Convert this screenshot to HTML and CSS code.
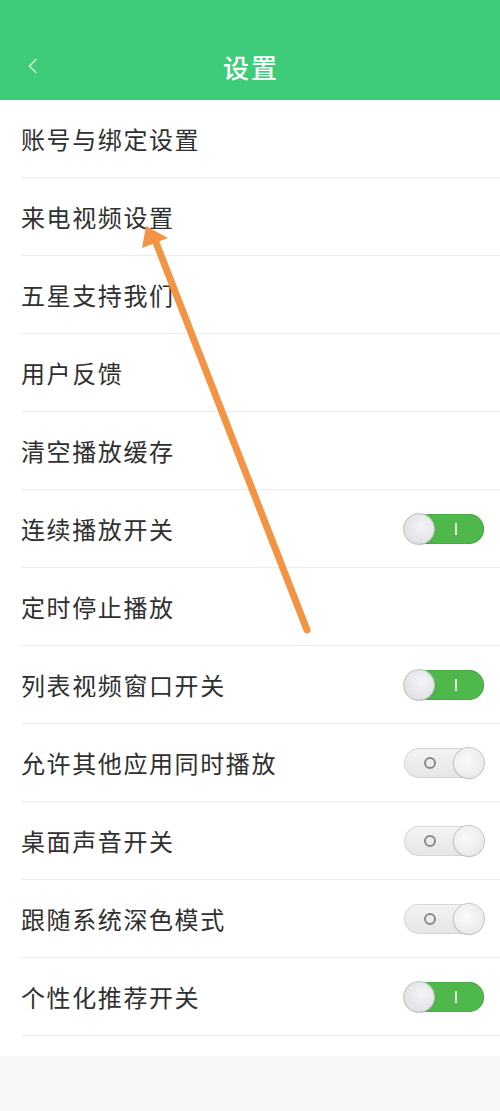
FILE: index.html
```html
<!DOCTYPE html>
<html lang="zh-CN">
<head>
<meta charset="utf-8">
<title>设置</title>
<link rel="stylesheet" href="styles.css">
</head>
<body>
<div class="page">
  <header class="topbar">
    <span class="back">
      <svg width="12" height="16" viewBox="0 0 12 16"><path d="M9 1.5 L2.5 8 L9 14.5" fill="none" stroke="#c9f0d6" stroke-width="1.6" stroke-linecap="round" stroke-linejoin="round"/></svg>
    </span>
    <h1 class="title">设置</h1>
  </header>
  <main class="list">
    <div class="row"><span class="label">账号与绑定设置</span></div>
    <div class="row"><span class="label">来电视频设置</span></div>
    <div class="row"><span class="label">五星支持我们</span></div>
    <div class="row"><span class="label">用户反馈</span></div>
    <div class="row"><span class="label">清空播放缓存</span></div>
    <div class="row"><span class="label">连续播放开关</span><span class="switch on"><span class="knob"></span><span class="mark"></span></span></div>
    <div class="row"><span class="label">定时停止播放</span></div>
    <div class="row"><span class="label">列表视频窗口开关</span><span class="switch on"><span class="knob"></span><span class="mark"></span></span></div>
    <div class="row"><span class="label">允许其他应用同时播放</span><span class="switch off"><span class="mark"></span><span class="knob"></span></span></div>
    <div class="row"><span class="label">桌面声音开关</span><span class="switch off"><span class="mark"></span><span class="knob"></span></span></div>
    <div class="row"><span class="label">跟随系统深色模式</span><span class="switch off"><span class="mark"></span><span class="knob"></span></span></div>
    <div class="row"><span class="label">个性化推荐开关</span><span class="switch on"><span class="knob"></span><span class="mark"></span></span></div>
  </main>
  <svg class="arrow" width="500" height="1111" viewBox="0 0 500 1111">
    <line x1="307" y1="630" x2="155" y2="240" stroke="#f39444" stroke-width="7" stroke-linecap="round"/>
    <polygon points="146,226 142,248 168,238" fill="#f39444"/>
  </svg>
</div>
</body>
</html>
```
FILE: styles.css
```css
* { box-sizing: border-box; }
html, body { margin: 0; padding: 0; }
body {
  background: #f7f7f7;
  font-family: "Noto Sans CJK SC", "Noto Sans", sans-serif;
  width: 500px;
  height: 1111px;
  overflow: hidden;
}
.page { position: relative; width: 500px; height: 1111px; }
.topbar {
  height: 100px;
  background: #3fcc7a;
  display: flex;
  align-items: flex-end;
  justify-content: center;
  padding-bottom: 15px;
  position: relative;
}
.back {
  position: absolute;
  left: 27px;
  top: 58px;
  display: flex;
}
.title {
  margin: 0;
  color: #ffffff;
  font-size: 26px;
  font-weight: 500;
  line-height: 36px;
  letter-spacing: 2px;
  padding-left: 2px;
}
.list {
  background: #ffffff;
  padding-left: 21px;
  padding-bottom: 20px;
}
.row {
  height: 78px;
  border-bottom: 1px solid #ececec;
  display: flex;
  align-items: center;
  justify-content: space-between;
  padding-right: 16px;
}
.label {
  font-size: 24px;
  color: #2f2f2f;
  letter-spacing: 1.6px;
  line-height: 30px;
}
.switch {
  width: 80px;
  height: 30px;
  border-radius: 15px;
  display: flex;
  align-items: center;
  position: relative;
}
.switch.on {
  background: #4fb84b;
  box-shadow: inset 0 0 0 1px #48ab45;
}
.switch.off {
  background: linear-gradient(#f3f3f3, #e6e6e6);
  box-shadow: inset 0 0 0 1px #d6d6d6;
  justify-content: space-between;
}
.knob {
  width: 30px;
  height: 30px;
  border-radius: 50%;
  background: radial-gradient(circle at 60% 40%, #f5f5f8, #d9d9df);
  box-shadow: 0 0 0 1px #c9c9cf, 1px 1px 2px rgba(0,0,0,0.15);
}
.switch.off .knob {
  background: radial-gradient(circle at 40% 40%, #fafafa, #e4e4e4);
  box-shadow: 0 0 0 1px #c4c4c4, -1px 1px 2px rgba(0,0,0,0.12);
}
.switch.on .mark {
  width: 2px;
  height: 12px;
  background: #e4f5e0;
  margin-left: 21px;
}
.switch.off .mark {
  width: 12px;
  height: 12px;
  border-radius: 50%;
  border: 2px solid #8a8a8a;
  margin-left: 20px;
}
.arrow {
  position: absolute;
  left: 0;
  top: 0;
  pointer-events: none;
}
```
